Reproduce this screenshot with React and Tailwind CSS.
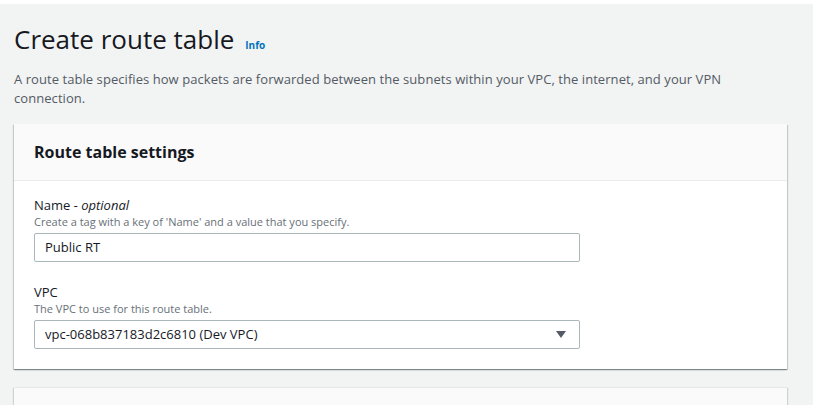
import React from 'react';

function Field({ label, optional, hint, children }) {
  return (
    <div className="flex flex-col">
      <div className="text-[13px] leading-[18px] text-[#16191f]">
        {label}
        {optional && <span className="italic"> - optional</span>}
      </div>
      <div className="text-[11px] leading-[16px] text-[#687078]">{hint}</div>
      <div className="mt-[3px]">{children}</div>
    </div>
  );
}

export default function App() {
  return (
    <div className="w-[815px] h-[410px] bg-white pt-[4px] pr-[2px] pb-[5px] overflow-hidden" style={{ fontFamily: '"Open Sans", "Liberation Sans", sans-serif' }}>
      <div className="h-full bg-[#f2f3f3] pl-[14px] pr-[26px] overflow-hidden">
        {/* Header */}
        <div className="pt-[18px] flex items-baseline gap-[11px]">
          <h1 className="text-[26px] leading-[34px] text-[#16191f] font-normal">Create route table</h1>
          <span className="text-[10px] font-bold text-[#0073bb]">Info</span>
        </div>
        <p className="mt-[14px] text-[13px] tracking-[0.06px] leading-[19px] text-[#545b64] max-w-[730px]">
          A route table specifies how packets are forwarded between the subnets within your VPC, the internet, and your VPN connection.
        </p>

        {/* Settings card */}
        <div className="mt-[16px] bg-white shadow-[0_1px_1px_0_rgba(0,28,36,0.3),1px_1px_1px_0_rgba(0,28,36,0.15),-1px_1px_1px_0_rgba(0,28,36,0.15)]">
          <div className="h-[57px] bg-[#fafafa] border-b border-[#eaeded] px-[20px] flex items-center">
            <h2 className="text-[16px] font-bold text-[#16191f]">Route table settings</h2>
          </div>
          <div className="px-[20px] pt-[15px] pb-[20px] flex flex-col gap-[21px]">
            <Field label="Name" optional hint="Create a tag with a key of 'Name' and a value that you specify.">
              <div className="w-[546px] h-[29px] border border-[#aab7b8] rounded-[2px] px-[10px] flex items-center text-[13px] text-[#16191f]">
                Public RT
              </div>
            </Field>
            <Field label="VPC" hint="The VPC to use for this route table.">
              <div className="w-[546px] h-[29px] border border-[#aab7b8] rounded-[2px] pl-[10px] pr-[13px] flex items-center justify-between text-[13px] text-[#16191f]">
                <span>vpc-068b837183d2c6810 (Dev VPC)</span>
                <svg width="10" height="7" viewBox="0 0 10 7">
                  <path d="M0 0 H10 L5 7 Z" fill="#545b64" />
                </svg>
              </div>
            </Field>
          </div>
        </div>

        {/* Next card (cut off) */}
        <div className="mt-[19px] h-[40px] bg-[#fafafa] shadow-[1px_0_1px_0_rgba(0,28,36,0.15),-1px_0_1px_0_rgba(0,28,36,0.15)]" />
      </div>
    </div>
  );
}
